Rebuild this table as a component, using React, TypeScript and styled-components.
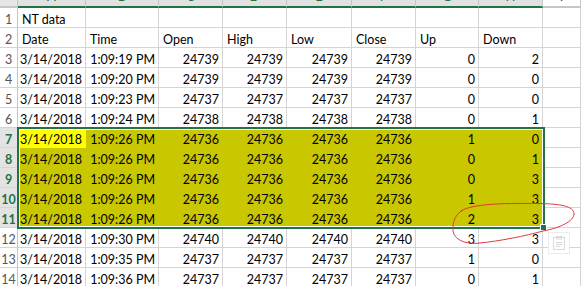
import React from "react";
import styled, { createGlobalStyle } from "styled-components";

const GlobalStyle = createGlobalStyle`
  html, body { margin: 0; padding: 0; background: #ffffff; overflow: hidden; }
  body { font-family: "Lato", "Liberation Sans", sans-serif; }
`;

const OFF = 11;
const COLS = [68, 73, 64, 64, 65, 64, 63, 64];
const LETTERS = ["A", "B", "C", "D", "E", "F", "G", "H"];
const GREEN = "#217346";

type Val = string | number;
const data: Val[][] = [
  ["NT data"],
  ["Date", "Time", "Open", "High", "Low", "Close", "Up", "Down"],
  ["3/14/2018", "1:09:19 PM", 24739, 24739, 24739, 24739, 0, 2],
  ["3/14/2018", "1:09:20 PM", 24739, 24739, 24739, 24739, 0, 0],
  ["3/14/2018", "1:09:23 PM", 24737, 24737, 24737, 24737, 0, 0],
  ["3/14/2018", "1:09:24 PM", 24738, 24738, 24738, 24738, 0, 1],
  ["3/14/2018", "1:09:26 PM", 24736, 24736, 24736, 24736, 1, 0],
  ["3/14/2018", "1:09:26 PM", 24736, 24736, 24736, 24736, 0, 1],
  ["3/14/2018", "1:09:26 PM", 24736, 24736, 24736, 24736, 0, 3],
  ["3/14/2018", "1:09:26 PM", 24736, 24736, 24736, 24736, 1, 3],
  ["3/14/2018", "1:09:26 PM", 24736, 24736, 24736, 24736, 2, 3],
  ["3/14/2018", "1:09:30 PM", 24740, 24740, 24740, 24740, 3, 3],
  ["3/14/2018", "1:09:35 PM", 24737, 24737, 24737, 24737, 1, 0],
  ["3/14/2018", "1:09:36 PM", 24737, 24737, 24737, 24737, 0, 1],
];

const Wrapper = styled.div`
  position: relative;
  margin-top: -${OFF}px;
  width: 581px;
`;

const Sheet = styled.div`
  display: grid;
  grid-template-columns: 18px ${COLS.map((c) => `${c}px`).join(" ")} 1fr;
  grid-template-rows: 19px repeat(14, 20px);
`;

const ColHeader = styled.div<{ $sel: boolean; $corner?: boolean }>`
  box-sizing: border-box;
  background: ${(p) => (p.$corner ? "#e6e6e6" : p.$sel ? "#e1e1e1" : "#ffffff")};
  border-right: 1px solid #c6c6c6;
  border-bottom: 2px solid ${(p) => (p.$sel ? GREEN : "#c6c6c6")};
  color: ${(p) => (p.$sel ? GREEN : "#444444")};
  font-size: 13px;
  display: flex;
  align-items: flex-end;
  justify-content: center;
  line-height: 15px;
  padding-bottom: 2px;
  overflow: hidden;
`;

const RowHeader = styled.div<{ $sel: boolean }>`
  box-sizing: border-box;
  background: ${(p) => (p.$sel ? "#e3e3e3" : "#ffffff")};
  border-right: 1px solid #c6c6c6;
  border-bottom: 1px solid #d4d4d4;
  color: ${(p) => (p.$sel ? GREEN : "#555555")};
  font-weight: ${(p) => (p.$sel ? 700 : 400)};
  font-size: 12.5px;
  display: flex;
  align-items: flex-end;
  justify-content: center;
  line-height: 15px;
  white-space: nowrap;
`;

type Fill = "none" | "sel" | "active";

const Cell = styled.div<{ $right: boolean; $fill: Fill }>`
  box-sizing: border-box;
  background: ${(p) => (p.$fill === "active" ? "#ffff00" : p.$fill === "sel" ? "#c9c800" : "#ffffff")};
  border-right: 1px solid ${(p) => (p.$fill === "none" ? "#d4d4d4" : "transparent")};
  border-bottom: 1px solid ${(p) => (p.$fill === "none" ? "#d4d4d4" : "transparent")};
  color: #000000;
  font-size: 12.5px;
  line-height: 15px;
  display: flex;
  align-items: flex-end;
  justify-content: ${(p) => (p.$right ? "flex-end" : "flex-start")};
  padding: ${(p) => (p.$right ? "0 3px 0 0" : "0 0 0 4px")};
  white-space: nowrap;
  overflow: visible;
`;

const Selection = styled.div`
  position: absolute;
  left: 17px;
  top: ${127 + OFF}px;
  width: 528px;
  height: 102px;
  box-sizing: border-box;
  border: 2px solid ${GREEN};
  box-shadow: inset 0 0 0 1px #ffffff;
  pointer-events: none;
`;

const FillHandle = styled.div`
  position: absolute;
  left: 540px;
  top: ${224 + OFF}px;
  width: 5px;
  height: 5px;
  background: ${GREEN};
  border: 1px solid #ffffff;
`;

const PasteButton = styled.div`
  position: absolute;
  left: 548px;
  top: ${232 + OFF}px;
  width: 22px;
  height: 22px;
  box-sizing: border-box;
  border: 1px solid #ececec;
  background: #ffffff;
  display: flex;
  align-items: center;
  justify-content: center;
`;

const Ink = styled.svg`
  position: absolute;
  left: 0;
  top: ${OFF}px;
  width: 581px;
  height: 286px;
  pointer-events: none;
`;

export default function App() {
  const isSelRow = (r: number) => r >= 7 && r <= 11;
  return (
    <>
      <GlobalStyle />
      <Wrapper>
        <Sheet>
          <ColHeader $sel={false} $corner />
          {LETTERS.map((l) => (
            <ColHeader key={l} $sel>
              {l}
            </ColHeader>
          ))}
          <ColHeader $sel={false}>I</ColHeader>
          {data.map((row, ri) => {
            const r = ri + 1;
            return (
              <React.Fragment key={r}>
                <RowHeader $sel={isSelRow(r)}>{r}</RowHeader>
                {COLS.map((_, ci) => {
                  const v = row[ci];
                  const fill: Fill = isSelRow(r) ? (r === 7 && ci === 0 ? "active" : "sel") : "none";
                  return (
                    <Cell key={ci} $right={r >= 3} $fill={fill}>
                      {v === undefined ? "" : String(v)}
                    </Cell>
                  );
                })}
                <Cell $right={false} $fill="none" />
              </React.Fragment>
            );
          })}
        </Sheet>
        <Selection />
        <FillHandle />
        <PasteButton>
          <svg width="12" height="14" viewBox="0 0 12 14" fill="none" stroke="#dadada" strokeWidth="1">
            <rect x="0.5" y="1.5" width="11" height="12" />
            <rect x="3.5" y="0.5" width="5" height="2.5" />
            <line x1="3" y1="6.5" x2="9" y2="6.5" />
            <line x1="3" y1="8.5" x2="9" y2="8.5" />
            <line x1="3" y1="10.5" x2="7" y2="10.5" />
          </svg>
        </PasteButton>
        <Ink viewBox="0 0 581 286">
          <path
            d="M 459 213 C 466 204, 500 203, 540 203.5 C 560 204, 574 206, 574 214 C 574 221, 560 228, 543 231 C 525 236, 500 241, 480 243 C 463 245, 452 238, 453 228 C 453 220, 456 214, 463 210"
            fill="none"
            stroke="#e0393e"
            strokeWidth="1"
          />
        </Ink>
      </Wrapper>
    </>
  );
}
